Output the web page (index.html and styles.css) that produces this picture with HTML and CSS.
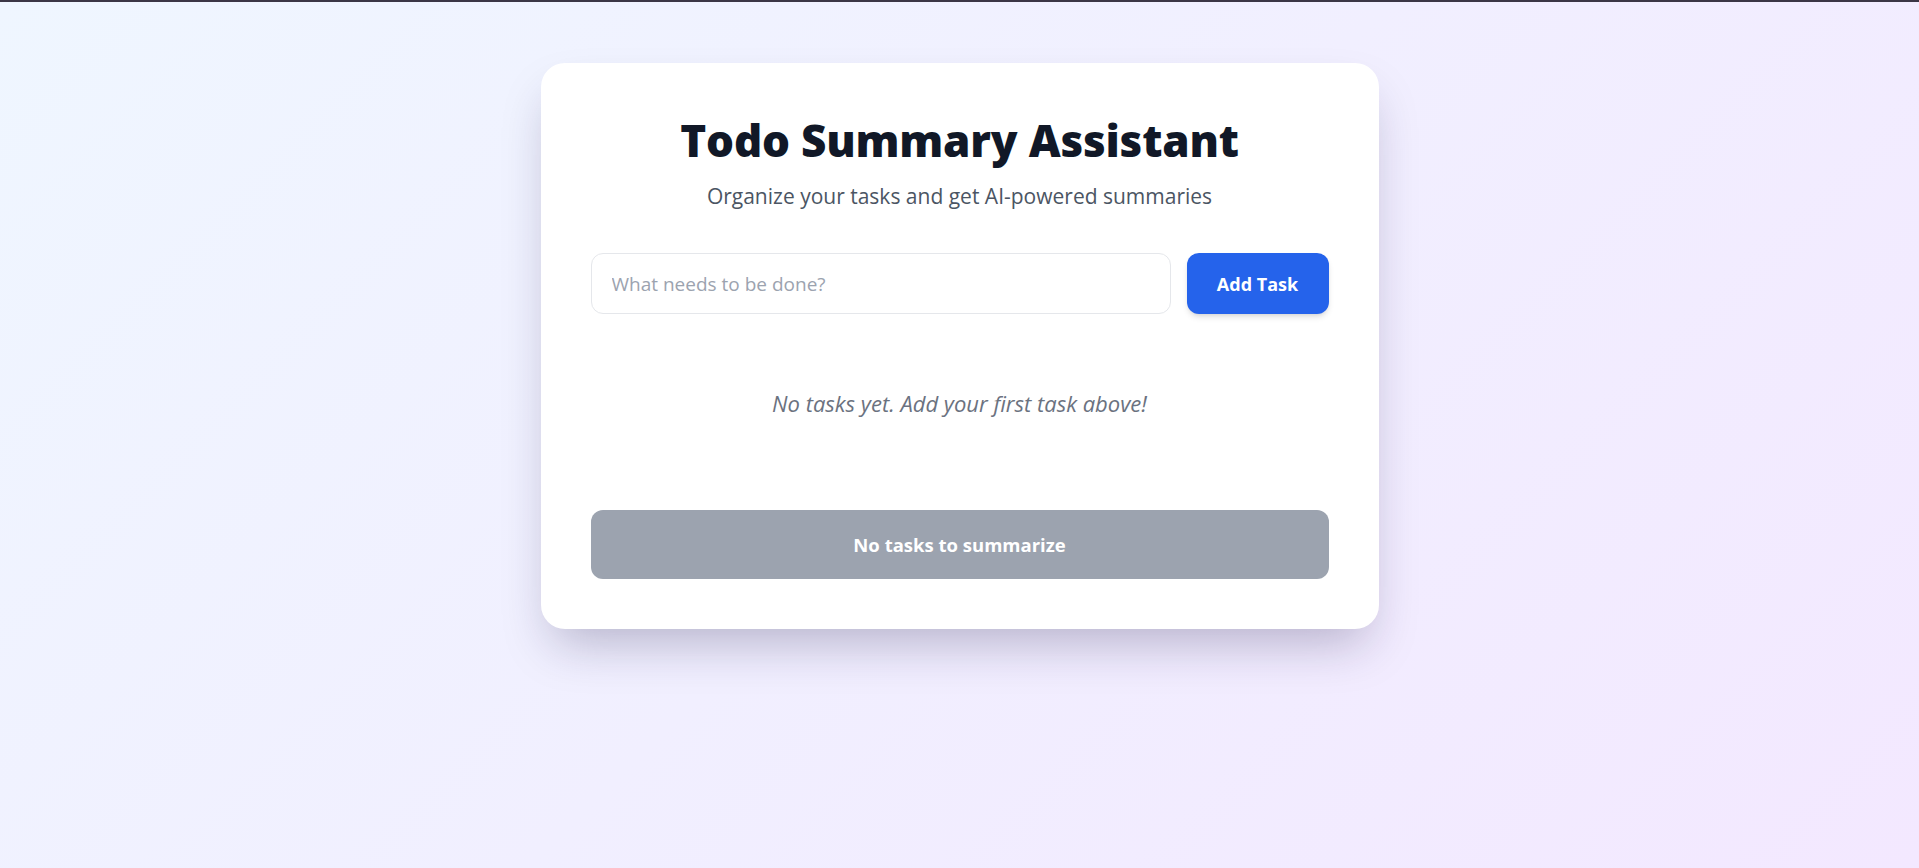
FILE: index.html
```html
<!DOCTYPE html>
<html lang="en">
<head>
<meta charset="utf-8">
<title>Todo Summary Assistant</title>
<link rel="stylesheet" href="styles.css">
</head>
<body>
<div class="topline"></div>
<main class="page">
  <section class="card">
    <header class="head">
      <h1 class="title">Todo Summary Assistant</h1>
      <p class="subtitle">Organize your tasks and get AI-powered summaries</p>
    </header>
    <form class="add-row" onsubmit="return false;">
      <input class="task-input" type="text" placeholder="What needs to be done?">
      <button class="add-btn" type="submit">Add Task</button>
    </form>
    <p class="empty">No tasks yet. Add your first task above!</p>
    <button class="summary-btn" type="button" disabled>No tasks to summarize</button>
  </section>
</main>
</body>
</html>
```
FILE: styles.css
```css
* { box-sizing: border-box; }
html, body { height: 100%; }
body {
  margin: 0;
  font-family: "Open Sans", "Noto Sans", "Liberation Sans", sans-serif;
  background: linear-gradient(135deg, #eff6ff 0%, #f3e8ff 100%);
  min-height: 868px;
}
.topline {
  height: 2px;
  background: #3b3646;
}
.page {
  display: flex;
  justify-content: center;
  padding-top: 61px;
}
.card {
  width: 838px;
  background: #ffffff;
  border-radius: 24px;
  padding: 50px;
  box-shadow: 0 25px 50px -12px rgba(30, 20, 70, 0.28);
  display: flex;
  flex-direction: column;
}
.head {
  text-align: center;
}
.title {
  margin: 0;
  font-size: 44px;
  line-height: 54px;
  font-weight: 800;
  color: #111827;
  letter-spacing: -0.2px;
}
.subtitle {
  margin: 14px 0 0;
  font-size: 21px;
  line-height: 30px;
  color: #4b5563;
}
.add-row {
  margin: 42px 0 0;
  display: flex;
  gap: 16px;
}
.task-input {
  flex: 1;
  height: 61px;
  border: 1px solid #e5e7eb;
  border-radius: 12px;
  padding: 0 20px;
  font-family: inherit;
  font-size: 19px;
  color: #111827;
  outline: none;
  background: #fff;
}
.task-input::placeholder { color: #9ca3af; }
.add-btn {
  width: 142px;
  height: 61px;
  border: none;
  border-radius: 12px;
  background: #2563eb;
  color: #ffffff;
  font-family: inherit;
  font-size: 18px;
  font-weight: 700;
  box-shadow: 0 4px 6px -1px rgba(0,0,0,0.12), 0 2px 4px -2px rgba(0,0,0,0.1);
  cursor: pointer;
}
.empty {
  margin: 74px 0 0;
  text-align: center;
  font-style: italic;
  font-size: 22px;
  line-height: 30px;
  color: #6b7280;
}
.summary-btn {
  margin-top: 92px;
  height: 69px;
  border: none;
  border-radius: 12px;
  background: #9ca3af;
  color: #ffffff;
  font-family: inherit;
  font-size: 18.5px;
  font-weight: 700;
}
```
